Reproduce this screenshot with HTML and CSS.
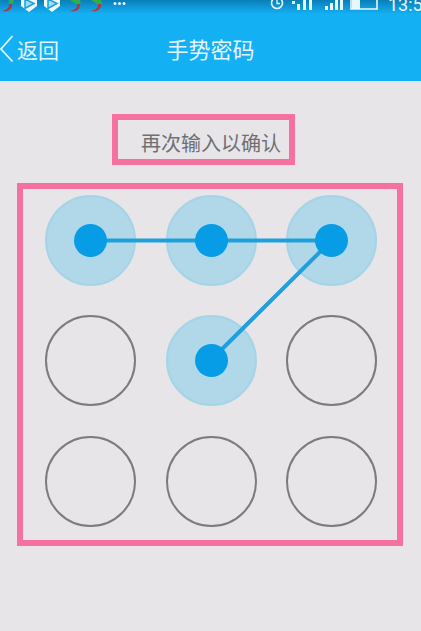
FILE: index.html
```html
<!DOCTYPE html>
<html lang="zh-CN">
  <head>
    <meta charset="UTF-8" />
    <meta name="viewport" content="width=device-width, initial-scale=1.0" />
    <title>手势密码</title>
    <link rel="stylesheet" href="styles.css">
  </head>
  <body>
    <header class="app-header">
      <div class="status-bar">
        <div class="status-left">
          <svg class="chili" viewBox="0 0 14 13"><path d="M9 4 C10 7 7 10 2 11 C8 12.500 12.500 9 12 4 Z" fill="#b5343c"/><path d="M9 0h5l-1 4H9z" fill="#2fae4a"/></svg>
          <svg class="play" viewBox="0 0 16 13"><path d="M0 -4h16v10l-8 6-8-6z" fill="#eef9fe"/><path d="M4 -1l9 4.500-9 5z" fill="#9fdcf6" stroke="#19a0dc" stroke-width="1.500"/></svg>
          <svg class="play" viewBox="0 0 16 13"><path d="M0 -4h16v10l-8 6-8-6z" fill="#eef9fe"/><path d="M4 -1l9 4.500-9 5z" fill="#9fdcf6" stroke="#19a0dc" stroke-width="1.500"/></svg>
          <svg class="chili" viewBox="0 0 14 13"><path d="M9 4 C10 7 7 10 2 11 C8 12.500 12.500 9 12 4 Z" fill="#b5343c"/><path d="M2 0h10l1 4H8z" fill="#2fae4a"/></svg>
          <svg class="chili" viewBox="0 0 14 13"><path d="M9 4 C10 7 7 10 2 11 C8 12.500 12.500 9 12 4 Z" fill="#b5343c"/><path d="M2 0h10l1 4H8z" fill="#2fae4a"/></svg>
          <svg class="more" viewBox="0 0 13 5"><circle cx="2" cy="2.500" r="1.500"/><circle cx="6.500" cy="2.500" r="1.500"/><circle cx="11" cy="2.500" r="1.500"/></svg>
        </div>
        <div class="status-right">
          <svg class="clock" viewBox="0 0 14 12"><circle cx="7" cy="3" r="5.500" fill="none" stroke="#e8f6fd" stroke-width="1.600"/><path d="M7 0v3.500h3" fill="none" stroke="#e8f6fd" stroke-width="1.300"/></svg>
          <svg class="signal" viewBox="0 0 21 11"><path d="M0 1h3v3H0zM5 4h3v6H5zM11 0h3v10h-3zM17 0h3v10h-3z" fill="#e8f6fd"/></svg>
          <svg class="signal short" viewBox="0 0 18 11"><path d="M0 6h3v4H0zM5 3h3v7H5zM10 0h3v10h-3zM15 0h3v10h-3z" fill="#e8f6fd"/></svg>
          <svg class="battery" viewBox="0 0 28 11"><path d="M1 -4h26v13H1z" fill="none" stroke="#e8f6fd" stroke-width="1.600"/><path d="M2 -4h8v13H2z" fill="#e8f6fd"/></svg>
          <span class="time">13:58</span>
        </div>
      </div>
      <div class="title-bar">
        <a class="back">
          <svg class="back-arrow" viewBox="0 0 14 28"><path d="M12.500 1 L1 14 L12.500 26.500" fill="none" stroke="#e6f6fe" stroke-width="1.800"/></svg>
          <span>返回</span>
        </a>
        <h1>手势密码</h1>
      </div>
    </header>

    <main class="content">
      <p class="hint">再次输入以确认</p>

      <div class="pattern-box">
        <div class="pattern">
          <div class="node on"><span class="dot"></span></div>
          <div class="node on"><span class="dot"></span></div>
          <div class="node on"><span class="dot"></span></div>
          <div class="node"></div>
          <div class="node on"><span class="dot"></span></div>
          <div class="node"></div>
          <div class="node"></div>
          <div class="node"></div>
          <div class="node"></div>
          <!-- line drawn over the nodes, coordinates are node centres -->
          <svg class="trace" viewBox="0 0 332 332"><path d="M45.500 45.500 H286.500 L166 165" fill="none" stroke="#1ea0dc" stroke-width="4"/></svg>
        </div>
      </div>
    </main>
  </body>
</html>
```

FILE: styles.css
```css
* {
  box-sizing: border-box;
}

body {
  margin: 0;
  width: 421px;
  height: 631px;
  overflow: hidden;
  background-color: #e7e5e8;
  font-family: "Noto Sans CJK SC", "Liberation Sans", sans-serif;
}

.app-header {
  height: 81px;
  background-color: #14b0f4;
}

.status-bar {
  height: 14px;
  display: flex;
  justify-content: space-between;
  overflow: hidden;
  background: linear-gradient(#0a7fb8, #14b0f4);
}

.status-left,
.status-right {
  display: flex;
  align-items: flex-start;
}

.status-left {
  gap: 7px;
}

.chili {
  width: 14px;
  height: 13px;
  flex-shrink: 0;
}

.play {
  width: 16px;
  height: 13px;
  flex-shrink: 0;
}

.play + .chili {
  margin-left: 1px;
}

.more {
  width: 13px;
  height: 5px;
  margin: 1px 0 0 3px;
  fill: #e8f6fd;
}

.status-right {
  width: 151px;
  flex-shrink: 0;
  gap: 8px;
}

.clock {
  width: 14px;
  height: 12px;
  flex-shrink: 0;
}

.signal {
  width: 21px;
  height: 11px;
  flex-shrink: 0;
}

.signal.short {
  width: 18px;
  margin-left: 4px;
}

.battery {
  width: 28px;
  height: 11px;
  margin-left: -1px;
  flex-shrink: 0;
}

.time {
  margin-left: 2px;
  color: #e8f6fd;
  font-family: "Roboto", sans-serif;
  font-size: 18px;
  line-height: 9px;
  white-space: nowrap;
}

.title-bar {
  height: 67px;
  position: relative;
  display: flex;
  align-items: center;
  justify-content: center;
  color: #e6f6fe;
}

.title-bar h1 {
  margin: 0;
  font-size: 22px;
  font-weight: 400;
}

.back {
  position: absolute;
  left: 0;
  top: 21px;
  display: flex;
  align-items: center;
  gap: 3px;
  font-size: 21px;
  line-height: 28px;
}

.back-arrow {
  width: 14px;
  height: 28px;
}

.content {
  display: flex;
  flex-direction: column;
  align-items: flex-start;
  padding: 33px 18px 0 17px;
}

.hint {
  margin: 0 0 18px 95px;
  width: 183px;
  height: 51px;
  border: 6px solid #f6719f;
  padding-left: 23px;
  color: #6f6f73;
  font-size: 20px;
  line-height: 45px;
  white-space: nowrap;
}

.pattern-box {
  width: 386px;
  height: 363px;
  border: 6px solid #f6719f;
  padding: 5.750px 0 0 22px;
}

.pattern {
  position: relative;
  width: 332px;
  display: grid;
  grid-template-columns: repeat(3, 91px);
  grid-auto-rows: 91px;
  column-gap: 29.500px;
  row-gap: 29.500px;
}

.node {
  border: 2px solid #7c7b7f;
  border-radius: 50%;
  display: flex;
  align-items: center;
  justify-content: center;
}

.node.on {
  border-color: #a4d4e6;
  background-color: #b1d8e9;
}

/* keeps the dots above the line */
.dot {
  position: relative;
  z-index: 1;
  width: 33px;
  height: 33px;
  border-radius: 50%;
  background-color: #069ce6;
}

.trace {
  position: absolute;
  left: 0;
  top: 0;
  width: 332px;
  height: 332px;
}
```
